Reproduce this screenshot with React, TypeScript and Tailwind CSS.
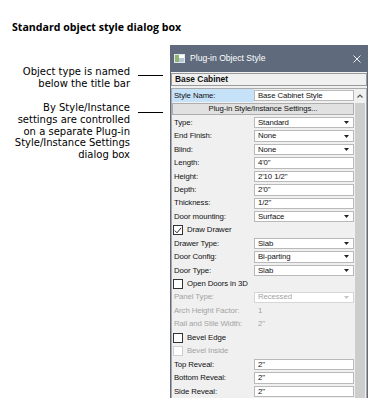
import React from 'react';

type Row =
  | { kind: 'text'; label: string; value: string; highlight?: boolean }
  | { kind: 'select'; label: string; value: string; disabled?: boolean }
  | { kind: 'plain'; label: string; value: string }
  | { kind: 'check'; label: string; checked?: boolean; disabled?: boolean }
  | { kind: 'button'; label: string };

const rows: Row[] = [
  { kind: 'text', label: 'Style Name:', value: 'Base Cabinet Style', highlight: true },
  { kind: 'button', label: 'Plug-in Style/Instance Settings...' },
  { kind: 'select', label: 'Type:', value: 'Standard' },
  { kind: 'select', label: 'End Finish:', value: 'None' },
  { kind: 'select', label: 'Blind:', value: 'None' },
  { kind: 'text', label: 'Length:', value: '4\'0"' },
  { kind: 'text', label: 'Height:', value: '2\'10 1/2"' },
  { kind: 'text', label: 'Depth:', value: '2\'0"' },
  { kind: 'text', label: 'Thickness:', value: '1/2"' },
  { kind: 'select', label: 'Door mounting:', value: 'Surface' },
  { kind: 'check', label: 'Draw Drawer', checked: true },
  { kind: 'select', label: 'Drawer Type:', value: 'Slab' },
  { kind: 'select', label: 'Door Config:', value: 'Bi-parting' },
  { kind: 'select', label: 'Door Type:', value: 'Slab' },
  { kind: 'check', label: 'Open Doors in 3D' },
  { kind: 'select', label: 'Panel Type:', value: 'Recessed', disabled: true },
  { kind: 'plain', label: 'Arch Height Factor:', value: '1' },
  { kind: 'plain', label: 'Rail and Stile Width:', value: '2"' },
  { kind: 'check', label: 'Bevel Edge' },
  { kind: 'check', label: 'Bevel Inside', disabled: true },
  { kind: 'text', label: 'Top Reveal:', value: '2"' },
  { kind: 'text', label: 'Bottom Reveal:', value: '2"' },
  { kind: 'text', label: 'Side Reveal:', value: '2"' },
];

const notes = [
  { lines: ['Object type is named', 'below the title bar'], mt: 'mt-[21px]' },
  {
    lines: ['By Style/Instance', 'settings are controlled', 'on a separate Plug-in', 'Style/Instance Settings', 'dialog box'],
    mt: 'mt-[13px]',
  },
];

function Caret({ disabled }: { disabled?: boolean }) {
  return (
    <svg width="5" height="3" viewBox="0 0 5 3" className="ml-auto mr-[4px]">
      <path d="M0 0H5L2.5 3Z" fill={disabled ? '#c4c4c4' : '#222'} />
    </svg>
  );
}

function GridRow({ row }: { row: Row }) {
  if (row.kind === 'button') {
    return (
      <div className="h-[13.45px] py-[1px]">
        <div className="h-full border border-[#adadad] bg-[#e1e1e1] flex items-center justify-center">
          {row.label}
        </div>
      </div>
    );
  }
  if (row.kind === 'check') {
    return (
      <div className={`h-[13.45px] flex items-center pl-[1px] ${row.disabled ? 'text-[#a3a3a3]' : ''}`}>
        <div className={`w-[10px] h-[10px] border bg-white flex items-center justify-center ${row.disabled ? 'border-[#cfcfcf]' : 'border-[#333]'}`}>
          {row.checked && (
            <svg width="8" height="7" viewBox="0 0 8 7">
              <path d="M0.8 3.6L3 5.8L7.2 0.8" fill="none" stroke="#222" strokeWidth="1" />
            </svg>
          )}
        </div>
        <span className="ml-[4px]">{row.label}</span>
      </div>
    );
  }
  const grey = (row.kind === 'select' && row.disabled) || row.kind === 'plain';
  return (
    <div className={`h-[13.45px] flex ${grey ? 'text-[#a3a3a3]' : ''}`}>
      <div className={`w-[82px] h-full flex items-center pl-[2px] ${row.kind === 'text' && row.highlight ? 'bg-[#c6e2f8]' : ''}`}>
        {row.label}
      </div>
      <div className="w-[100px] h-full py-[1px]">
        {row.kind === 'plain' ? (
          <div className="h-full flex items-center pl-[4px]">{row.value}</div>
        ) : (
          <div className={`h-full border bg-white flex items-center pl-[3px] ${grey ? 'border-[#d6d6d6]' : 'border-[#b9b9b9]'}`}>
            <span>{row.value}</span>
            {row.kind === 'select' && <Caret disabled={row.disabled} />}
          </div>
        )}
      </div>
    </div>
  );
}

function Dialog() {
  return (
    <div className="w-[198px] h-[353px] flex flex-col overflow-hidden" style={{ fontFamily: '"Liberation Sans", Arial, sans-serif' }}>
      <div className="h-[27px] shrink-0 bg-[#5f6b7d] flex items-center pl-[4px] pr-[7px] text-white text-[8.6px]">
        <svg width="11" height="9" viewBox="0 0 11 9">
          <rect x="0" y="0" width="11" height="9" fill="#dfe6ee" />
          <rect x="1" y="1" width="4" height="7" fill="#8fb36a" />
          <rect x="5" y="1" width="5" height="3" fill="#ffffff" />
          <rect x="5" y="4" width="5" height="4" fill="#b7c6d6" />
        </svg>
        <span className="ml-[5px]">Plug-in Object Style</span>
        <svg width="8" height="8" viewBox="0 0 8 8" className="ml-auto">
          <path d="M0.5 0.5L7.5 7.5M7.5 0.5L0.5 7.5" stroke="#fff" strokeWidth="0.9" />
        </svg>
      </div>
      <div className="flex-1 border-x border-[#5f6b7d] bg-[#f0f0f0] flex flex-col text-[7.8px] tracking-[-0.1px] text-[#111]">
        <div className="mt-[1px] h-[13px] border border-[#9a9a9a] flex items-center pl-[3px] font-bold text-[8.4px] tracking-normal">
          Base Cabinet
        </div>
        <div className="mt-[2px] flex-1 border border-[#a9a9a9] flex">
          <div className="w-[182px]">
            {rows.map((r, i) => (
              <GridRow key={i} row={r} />
            ))}
          </div>
          <div className="w-[12px] flex flex-col">
            <div className="h-[14px] flex items-center justify-center">
              <svg width="6" height="4" viewBox="0 0 6 4">
                <path d="M0.5 3.5L3 1L5.5 3.5" fill="none" stroke="#555" strokeWidth="1.2" />
              </svg>
            </div>
            <div className="flex-1 mx-[1px] bg-[#cdcdcd]" />
          </div>
        </div>
      </div>
    </div>
  );
}

export default function App() {
  return (
    <div className="w-[368px] h-[419px] bg-white text-black" style={{ fontFamily: '"Open Sans", "Liberation Sans", sans-serif' }}>
      <div className="h-[45px] pt-[20px] pl-[12px] text-[10.6px] font-bold leading-[14px]">
        Standard object style dialog box
      </div>
      <div className="flex">
        <div className="w-[170px] flex flex-col text-[10px]" style={{ fontFamily: '"DejaVu Sans", sans-serif' }}>
          {notes.map((n, i) => (
            <div key={i} className={`${n.mt} flex items-start`}>
              <div className="w-[130px] flex flex-col items-end">
                {n.lines.map((l) => (
                  <div key={l} className="h-[11.7px] leading-[11.7px] whitespace-nowrap">
                    {l}
                  </div>
                ))}
              </div>
              <div className={`${i === 0 ? 'mt-[9px]' : 'mt-[10px]'} ml-[8px] w-[25px] h-px bg-black`} />
            </div>
          ))}
        </div>
        <Dialog />
      </div>
    </div>
  );
}
